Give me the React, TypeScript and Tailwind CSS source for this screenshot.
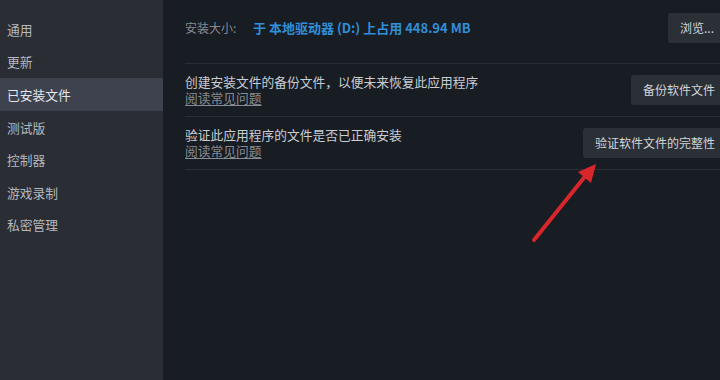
import React from 'react';

const navItems = ['通用', '更新', '已安装文件', '测试版', '控制器', '游戏录制', '私密管理'];

function ActionRow({ text, button }: { text: string; button: string }) {
  return (
    <div className="flex items-center justify-between border-b border-[#2a2e36] py-[10px]">
      <div className="leading-[16px] text-[12.75px]">
        <p className="text-[#c9cdd3]">{text}</p>
        <a className="block text-[#868c95] underline underline-offset-2">阅读常见问题</a>
      </div>
      <button className="h-[30px] rounded-[3px] bg-[#2b2f36] px-[12px] text-[12px] text-[#d2d5da]">
        {button}
      </button>
    </div>
  );
}

export default function App() {
  return (
    <div
      className="relative flex h-[380px] w-[720px] overflow-hidden"
      style={{ fontFamily: '"Noto Sans CJK SC", "Noto Sans", sans-serif' }}
    >
      <div className="w-[163px] shrink-0 bg-[#2a2d33] pt-[13px]">
        {navItems.map((item) => (
          <div
            key={item}
            className={`flex h-[32.6px] items-center pl-[7px] text-[12.75px] ${
              item === '已安装文件' ? 'bg-[#3d424e] text-[#e4e6ea]' : 'text-[#b4b8bf]'
            }`}
          >
            {item}
          </div>
        ))}
      </div>

      <div className="flex-1 bg-[#181c23] pl-[22px]">
        <div className="mr-[-7px]">
          <div className="flex items-center justify-between border-b border-[#2a2e36] pt-[13px] pb-[20px]">
            <div className="flex items-center text-[12px]">
              <span className="w-[68px] text-[#858b94]">安装大小:</span>
              <span className="text-[13px] font-semibold text-[#2f8fd8]">于 本地驱动器 (D:) 上占用 448.94 MB</span>
            </div>
            <button className="h-[30px] w-[59px] rounded-[3px] bg-[#2b2f36] pl-[12px] text-left text-[12px] text-[#d2d5da]">
              浏览...
            </button>
          </div>
          <ActionRow text="创建安装文件的备份文件，以便未来恢复此应用程序" button="备份软件文件" />
          <ActionRow text="验证此应用程序的文件是否已正确安装" button="验证软件文件的完整性" />
        </div>
      </div>

      <svg className="pointer-events-none absolute left-0 top-0" width="720" height="380">
        <line x1="534" y1="240" x2="587" y2="174" stroke="#d8262a" strokeWidth="4" strokeLinecap="round" />
        <polygon points="596,164 578,172 591,183" fill="#d8262a" />
      </svg>
    </div>
  );
}
